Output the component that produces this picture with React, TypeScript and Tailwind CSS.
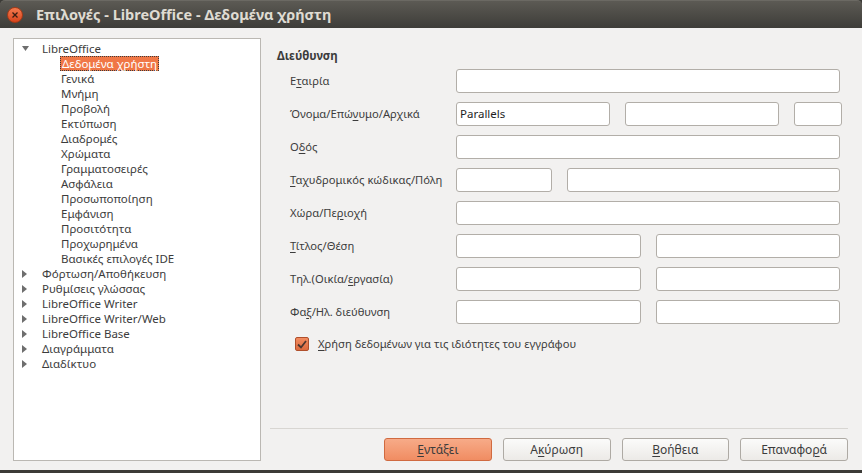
import React from "react";

const font = { fontFamily: '"Noto Sans", "DejaVu Sans", sans-serif' };

type TreeItem = { label: string; level: 0 | 1; open?: boolean; selected?: boolean };

const tree: TreeItem[] = [
  { label: "LibreOffice", level: 0, open: true },
  { label: "Δεδομένα χρήστη", level: 1, selected: true },
  { label: "Γενικά", level: 1 },
  { label: "Μνήμη", level: 1 },
  { label: "Προβολή", level: 1 },
  { label: "Εκτύπωση", level: 1 },
  { label: "Διαδρομές", level: 1 },
  { label: "Χρώματα", level: 1 },
  { label: "Γραμματοσειρές", level: 1 },
  { label: "Ασφάλεια", level: 1 },
  { label: "Προσωποποίηση", level: 1 },
  { label: "Εμφάνιση", level: 1 },
  { label: "Προσιτότητα", level: 1 },
  { label: "Προχωρημένα", level: 1 },
  { label: "Βασικές επιλογές IDE", level: 1 },
  { label: "Φόρτωση/Αποθήκευση", level: 0 },
  { label: "Ρυθμίσεις γλώσσας", level: 0 },
  { label: "LibreOffice Writer", level: 0 },
  { label: "LibreOffice Writer/Web", level: 0 },
  { label: "LibreOffice Base", level: 0 },
  { label: "Διαγράμματα", level: 0 },
  { label: "Διαδίκτυο", level: 0 },
];

// label split around the mnemonic letter: [before, key, after]
const U = ({ parts }: { parts: [string, string, string] }) => (
  <>
    {parts[0]}
    <span className="underline underline-offset-2">{parts[1]}</span>
    {parts[2]}
  </>
);

const Arrow = ({ open }: { open?: boolean }) =>
  open ? (
    <svg width="7" height="6" viewBox="0 0 7 6">
      <polygon points="0,0 7,0 3.5,5" fill="#6e6e6e" />
    </svg>
  ) : (
    <svg width="6" height="8" viewBox="0 0 6 8">
      <polygon points="0,0 5,4 0,8" fill="#6e6e6e" />
    </svg>
  );

const Field = ({ w, value }: { w: string; value?: string }) => (
  <div
    className={`${w} h-[24px] shrink-0 rounded-[3px] border border-[#b2aea8] bg-white px-[3px] text-[11.5px] leading-[22px] text-[#1e1e1e]`}
  >
    {value}
  </div>
);

const rows: { label: [string, string, string]; fields: string[]; value?: string }[] = [
  { label: ["Ε", "τ", "αιρία"], fields: ["w-[384px]"] },
  { label: ["Όνομα/Επώ", "ν", "υμο/Αρχικά"], fields: ["w-[154px]", "w-[154px]", "w-[48px]"], value: "Parallels" },
  { label: ["Ο", "δ", "ός"], fields: ["w-[384px]"] },
  { label: ["", "Τ", "αχυδρομικός κώδικας/Πόλη"], fields: ["w-[96px]", "w-[273px]"] },
  { label: ["Χώρα/Πε", "ρ", "ιοχή"], fields: ["w-[384px]"] },
  { label: ["", "Τ", "ίτλος/Θέση"], fields: ["w-[185px]", "w-[184px]"] },
  { label: ["Τηλ.(Οικία/", "ε", "ργασία)"], fields: ["w-[185px]", "w-[184px]"] },
  { label: ["Φα", "ξ", "/Ηλ. διεύθυνση"], fields: ["w-[185px]", "w-[184px]"] },
];

const buttons: { label: [string, string, string]; primary?: boolean }[] = [
  { label: ["", "Ε", "ντάξει"], primary: true },
  { label: ["Α", "κ", "ύρωση"] },
  { label: ["", "Β", "οήθεια"] },
  { label: ["Επαναφο", "ρ", "ά"] },
];

export default function App() {
  return (
    <div className="w-[862px] h-[473px] flex flex-col bg-[#3c3b37] overflow-hidden" style={font}>
      {/* title bar */}
      <div className="h-[28px] shrink-0 flex items-center rounded-t-[5px] bg-gradient-to-b from-[#5c5a54] to-[#3e3d39] border-t border-[#6b6963]">
        <div className="ml-[7px] w-[16px] h-[16px] rounded-full bg-gradient-to-b from-[#f47a4e] to-[#d9431a] border border-[#a63a17] flex items-center justify-center">
          <svg width="6" height="6" viewBox="0 0 6 6">
            <path d="M0.5 0.5 L5.5 5.5 M5.5 0.5 L0.5 5.5" stroke="#3a1d12" strokeWidth="1.3" />
          </svg>
        </div>
        <span className="ml-[13px] text-[14.5px] font-bold text-[#dfdbd2]">
          Επιλογές - LibreOffice - Δεδομένα χρήστη
        </span>
      </div>

      {/* body */}
      <div className="h-[442px] shrink-0 flex bg-[#f2f1f0] pl-[13px] pt-[10px] pb-[9px] text-[#3c3c3c]">
        {/* tree */}
        <div className="w-[248px] shrink-0 border border-[#bbb8b3] bg-white pt-[2px] text-[11.5px]">
          {tree.map((t) => (
            <div
              key={t.label}
              className={`h-[15px] flex items-center leading-[15px] ${t.level === 0 ? "pl-[8px]" : "pl-[46px]"}`}
            >
              {t.level === 0 && (
                <span className="w-[19px] shrink-0 flex items-center">
                  <Arrow open={t.open} />
                </span>
              )}
              {t.selected ? (
                <span className="h-[15px] px-[1px] leading-[13px] bg-[#f07746] text-white border border-dotted border-[#3c3c3c]">
                  {t.label}
                </span>
              ) : (
                <span className="px-[1px]">{t.label}</span>
              )}
            </div>
          ))}
        </div>

        {/* right panel */}
        <div className="ml-[9px] w-[578px] flex flex-col text-[11.2px]">
          <div className="pl-[7px] pt-[10px] h-[31px] leading-[16px] font-bold text-[11.5px]">Διεύθυνση</div>
          <div className="flex flex-col gap-[9px] pl-[20px]">
            {rows.map((r, i) => (
              <div key={i} className="flex items-center h-[24px]">
                <div className="w-[166px] shrink-0">
                  <U parts={r.label} />
                </div>
                <div className="flex gap-[15px]">
                  {r.fields.map((w, j) => (
                    <Field key={j} w={w} value={j === 0 ? r.value : undefined} />
                  ))}
                </div>
              </div>
            ))}
          </div>
          <div className="mt-[12px] pl-[25px] flex items-center h-[16px] gap-[9px]">
            <div className="w-[14px] h-[14px] rounded-[2px] border border-[#b04f2b] bg-gradient-to-b from-[#f28c60] to-[#dc6a3e] flex items-center justify-center">
              <svg width="10" height="9" viewBox="0 0 10 9">
                <path d="M1 4.5 L4 7.5 L9 1" fill="none" stroke="#4a3630" strokeWidth="1.8" />
              </svg>
            </div>
            <span>
              <U parts={["", "Χ", "ρήση δεδομένων για τις ιδιότητες του εγγράφου"]} />
            </span>
          </div>

          <div className="flex-1" />
          <div className="h-px bg-[#d8d6d2]" />
          <div className="mt-[9px] pl-[114px] flex gap-[11px] text-[12px]">
            {buttons.map((b, i) => (
              <div
                key={i}
                className={`w-[108px] h-[23px] rounded-[3px] border flex items-center justify-center ${
                  b.primary
                    ? "border-[#d06a40] bg-gradient-to-b from-[#f7ab88] to-[#f08c62] text-[#3c3c3c]"
                    : "border-[#aeaaa4] bg-gradient-to-b from-[#fbfbfa] to-[#eceae7]"
                }`}
              >
                <U parts={b.label} />
              </div>
            ))}
          </div>
        </div>
      </div>

      <div className="flex-1 bg-[#3c3b37]" />
    </div>
  );
}
